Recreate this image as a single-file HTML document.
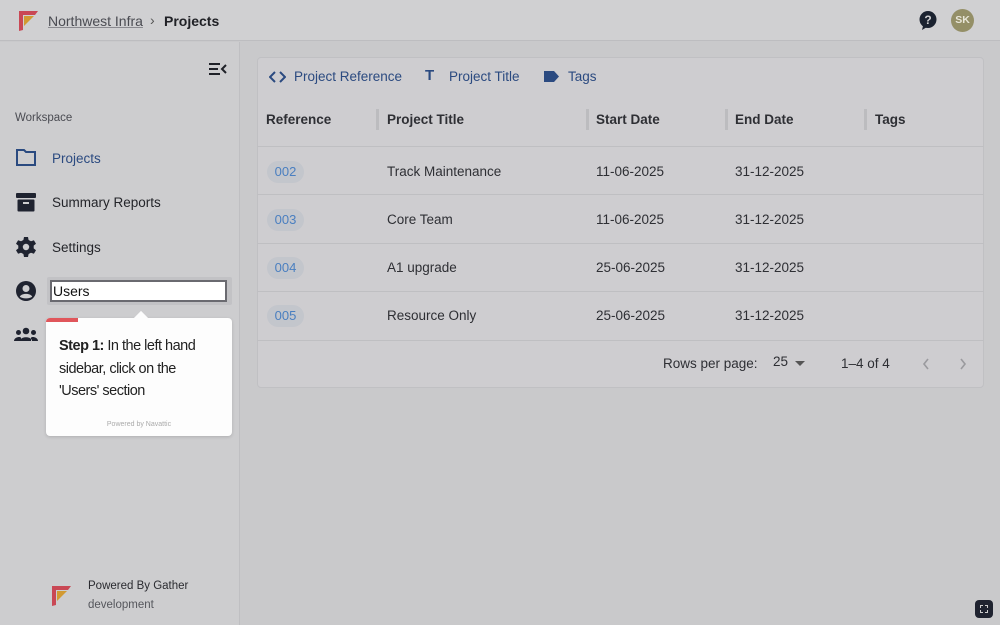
<!DOCTYPE html>
<html><head><meta charset="utf-8"><style>
*{box-sizing:border-box;margin:0;padding:0}
body{width:1000px;height:625px;overflow:hidden;font-family:"Liberation Sans",sans-serif;background:#c9c9cb;position:relative;color:#1f1f24}
.hdr{position:absolute;left:0;top:0;width:1000px;height:41px;background:#d0d0d2;border-bottom:1px solid #bdbdc0}
.side{position:absolute;left:0;top:42px;width:240px;height:583px;background:#cdcdcf;border-right:1px solid #bfbfc2}
.abs{position:absolute}
.nav{position:absolute;left:52px;font-size:13.5px;color:#24252a}
.card{position:absolute;left:257px;top:57px;width:727px;height:331px;background:#cecdd0;border:1px solid #c0c0c3;border-radius:4px}
.th{position:absolute;top:112px;font-size:13.5px;font-weight:bold;color:#2e2f34}
.sep{position:absolute;top:109px;width:3px;height:21px;background:#bcbcbf}
.row{position:absolute;left:257px;width:727px;border-top:1px solid #bfbfc2}
.cell{position:absolute;font-size:13.5px;color:#2e2f34}
.chip{position:absolute;left:267px;width:37px;height:22px;border-radius:11px;background:#c3c6cc;color:#4a7fc0;font-size:13px;text-align:center;line-height:22px}
</style></head><body>
<div class="hdr">
 <svg class="abs" style="left:19px;top:11px" width="20" height="20" viewBox="0 0 20 20"><path d="M0 0H19L16 4H4V19L0 20Z" fill="#c94855"/><path d="M5 5H15L5 15Z" fill="#d29a32"/></svg>
 <div class="abs" style="left:48px;top:13px;font-size:14px;color:#4a4b52;text-decoration:underline;text-decoration-color:#8a8a90">Northwest Infra</div>
 <div class="abs" style="left:150px;top:12px;font-size:14px;color:#555">›</div>
 <div class="abs" style="left:164px;top:13px;font-size:14px;font-weight:bold;color:#202126">Projects</div>
 <svg class="abs" style="left:919px;top:11px" width="18" height="19" viewBox="0 0 18 19"><circle cx="9" cy="8.5" r="8.5" fill="#1b2230"/><path d="M4 15L3 19L8 16Z" fill="#1b2230"/><text x="9" y="13" font-size="12" font-weight="bold" fill="#d0d0d2" text-anchor="middle" font-family="Liberation Sans">?</text></svg>
 <div class="abs" style="left:951px;top:9px;width:23px;height:23px;border-radius:50%;background:#948f67;color:#e8e6d8;font-size:10.5px;font-weight:bold;text-align:center;line-height:23px">SK</div>
</div>
<div class="side">
 <svg class="abs" style="left:208px;top:20px" width="19" height="14" viewBox="0 0 19 14"><path d="M1 2H12M1 7H10M1 12H12M18 3L14 7L18 11" stroke="#1f2128" stroke-width="2" fill="none"/></svg>
 <div class="abs" style="left:15px;top:70px;font-size:11.5px;color:#4a4b52">Workspace</div>
 <svg class="abs" style="left:16px;top:107px" width="20" height="17" viewBox="0 0 20 17"><path d="M1 1H8L10 3H19V16H1Z" stroke="#2a4a80" stroke-width="2" fill="none"/></svg>
 <div class="nav" style="top:109px;color:#2b4a80">Projects</div>
 <svg class="abs" style="left:16px;top:151px" width="20" height="19" viewBox="0 0 20 19"><rect x="0" y="0" width="20" height="5" rx="1" fill="#1f2330"/><rect x="1.5" y="6.5" width="17" height="12" rx="1" fill="#1f2330"/><rect x="7" y="9" width="6" height="2" fill="#cdcdcf"/></svg>
 <div class="nav" style="top:153px">Summary Reports</div>
 <svg class="abs" style="left:16px;top:195px" width="20" height="20" viewBox="0 0 20 20"><path d="M8 0H12L12.6 3 15 4.3 17.9 3.2 20 6.7 17.7 8.6V11.4L20 13.3 17.9 16.8 15 15.7 12.6 17 12 20H8L7.4 17 5 15.7 2.1 16.8 0 13.3 2.3 11.4V8.6L0 6.7 2.1 3.2 5 4.3 7.4 3Z" fill="#1f2330"/><circle cx="10" cy="10" r="3.2" fill="#cdcdcf"/></svg>
 <div class="nav" style="top:198px">Settings</div>
 <svg class="abs" style="left:16px;top:239px" width="20" height="20" viewBox="0 0 20 20"><circle cx="10" cy="10" r="10" fill="#1f2330"/><circle cx="10" cy="7.5" r="3.5" fill="#cdcdcf"/><path d="M3.8 15.5C6 12 14 12 16.2 15.5 14 18 6 18 3.8 15.5Z" fill="#cdcdcf"/></svg>
 <div class="abs" style="left:47px;top:235px;width:185px;height:28px;background:#c2c2c5;border-radius:2px"></div>
 <div class="abs" style="left:50px;top:238px;width:177px;height:22px;background:#fff;border:2px solid #6a6a70;font-size:14px;padding-left:1px;line-height:18px;color:#111">Users</div>
 <svg class="abs" style="left:14px;top:285px" width="24" height="15" viewBox="0 0 24 15"><circle cx="12" cy="4" r="3.3" fill="#1f2330"/><circle cx="4.5" cy="5.5" r="2.5" fill="#1f2330"/><circle cx="19.5" cy="5.5" r="2.5" fill="#1f2330"/><path d="M6 14C6 9 18 9 18 14Z M0 14C0 10 7 9 7 11V14Z M24 14C24 10 17 9 17 11V14Z" fill="#1f2330"/></svg>
 <div class="abs" style="left:46px;top:276px;width:186px;height:118px;background:#fdfdfd;border-radius:4px;box-shadow:0 1px 3px rgba(0,0,0,.15)">
  <div class="abs" style="left:0;top:0;width:32px;height:4px;background:#e0565b;border-radius:4px 0 0 0"></div>
  <div class="abs" style="left:90px;top:-5px;width:10px;height:10px;background:#fdfdfd;transform:rotate(45deg)"></div>
  <div class="abs" style="left:13px;top:17px;width:150px;font-size:14.5px;line-height:22.5px;color:#222;letter-spacing:-0.5px"><b>Step 1:</b> In the left hand sidebar, click on the 'Users' section</div>
  <div class="abs" style="left:0;top:103px;width:186px;text-align:center;font-size:7px;color:#aaa">Powered by Navattic</div>
 </div>
 <svg class="abs" style="left:52px;top:544px" width="20" height="20" viewBox="0 0 20 20"><path d="M0 0H19L16 4H4V19L0 20Z" fill="#c94855"/><path d="M5 5H15L5 15Z" fill="#d29a32"/></svg>
 <div class="abs" style="left:88px;top:538px;font-size:11.5px;color:#2a2b30">Powered By Gather</div>
 <div class="abs" style="left:88px;top:557px;font-size:11.5px;color:#55565c">development</div>
</div>
<div class="card"></div>
<svg class="abs" style="left:269px;top:71px" width="17" height="12" viewBox="0 0 17 12"><path d="M6 1L1 6 6 11M11 1L16 6 11 11" stroke="#2b4a80" stroke-width="2" fill="none"/></svg>
<div class="abs" style="left:294px;top:69px;font-size:13.5px;color:#2b4a80">Project Reference</div>
<div class="abs" style="left:425px;top:67px;font-size:15px;font-weight:bold;color:#2b4a80">T</div>
<div class="abs" style="left:449px;top:69px;font-size:13.5px;color:#2b4a80">Project Title</div>
<svg class="abs" style="left:543px;top:71px" width="16" height="11" viewBox="0 0 16 11"><path d="M1 0H11L16 5.5 11 11H1Z" fill="#2b4a80"/></svg>
<div class="abs" style="left:568px;top:69px;font-size:13.5px;color:#2b4a80">Tags</div>
<div class="th" style="left:266px">Reference</div>
<div class="sep" style="left:376px"></div><div class="th" style="left:387px">Project Title</div>
<div class="sep" style="left:586px"></div><div class="th" style="left:596px">Start Date</div>
<div class="sep" style="left:725px"></div><div class="th" style="left:735px">End Date</div>
<div class="sep" style="left:864px"></div><div class="th" style="left:875px">Tags</div>
<div class="row" style="top:146px"></div>
<div class="row" style="top:194px"></div>
<div class="row" style="top:243px"></div>
<div class="row" style="top:291px"></div>
<div class="row" style="top:340px"></div>
<div class="chip" style="top:161px">002</div><div class="cell" style="left:387px;top:164px">Track Maintenance</div><div class="cell" style="left:596px;top:164px">11-06-2025</div><div class="cell" style="left:735px;top:164px">31-12-2025</div>
<div class="chip" style="top:209px">003</div><div class="cell" style="left:387px;top:212px">Core Team</div><div class="cell" style="left:596px;top:212px">11-06-2025</div><div class="cell" style="left:735px;top:212px">31-12-2025</div>
<div class="chip" style="top:257px">004</div><div class="cell" style="left:387px;top:260px">A1 upgrade</div><div class="cell" style="left:596px;top:260px">25-06-2025</div><div class="cell" style="left:735px;top:260px">31-12-2025</div>
<div class="chip" style="top:305px">005</div><div class="cell" style="left:387px;top:308px">Resource Only</div><div class="cell" style="left:596px;top:308px">25-06-2025</div><div class="cell" style="left:735px;top:308px">31-12-2025</div>
<div class="cell" style="left:663px;top:356px">Rows per page:</div>
<div class="cell" style="left:773px;top:354px">25</div>
<svg class="abs" style="left:795px;top:361px" width="10" height="5"><path d="M0 0H10L5 5Z" fill="#555"/></svg>
<div class="cell" style="left:841px;top:356px">1–4 of 4</div>
<svg class="abs" style="left:922px;top:358px" width="8" height="12"><path d="M6 1L2 6 6 11" stroke="#9a9a9e" stroke-width="1.6" fill="none"/></svg>
<svg class="abs" style="left:959px;top:358px" width="8" height="12"><path d="M2 1L6 6 2 11" stroke="#9a9a9e" stroke-width="1.6" fill="none"/></svg>
<div class="abs" style="left:975px;top:600px;width:18px;height:18px;border-radius:4px;background:#1f2330"></div>
<div class="abs" style="left:980px;top:605px;width:8px;height:8px;border:1.5px dashed #ccc"></div>
</body></html>
